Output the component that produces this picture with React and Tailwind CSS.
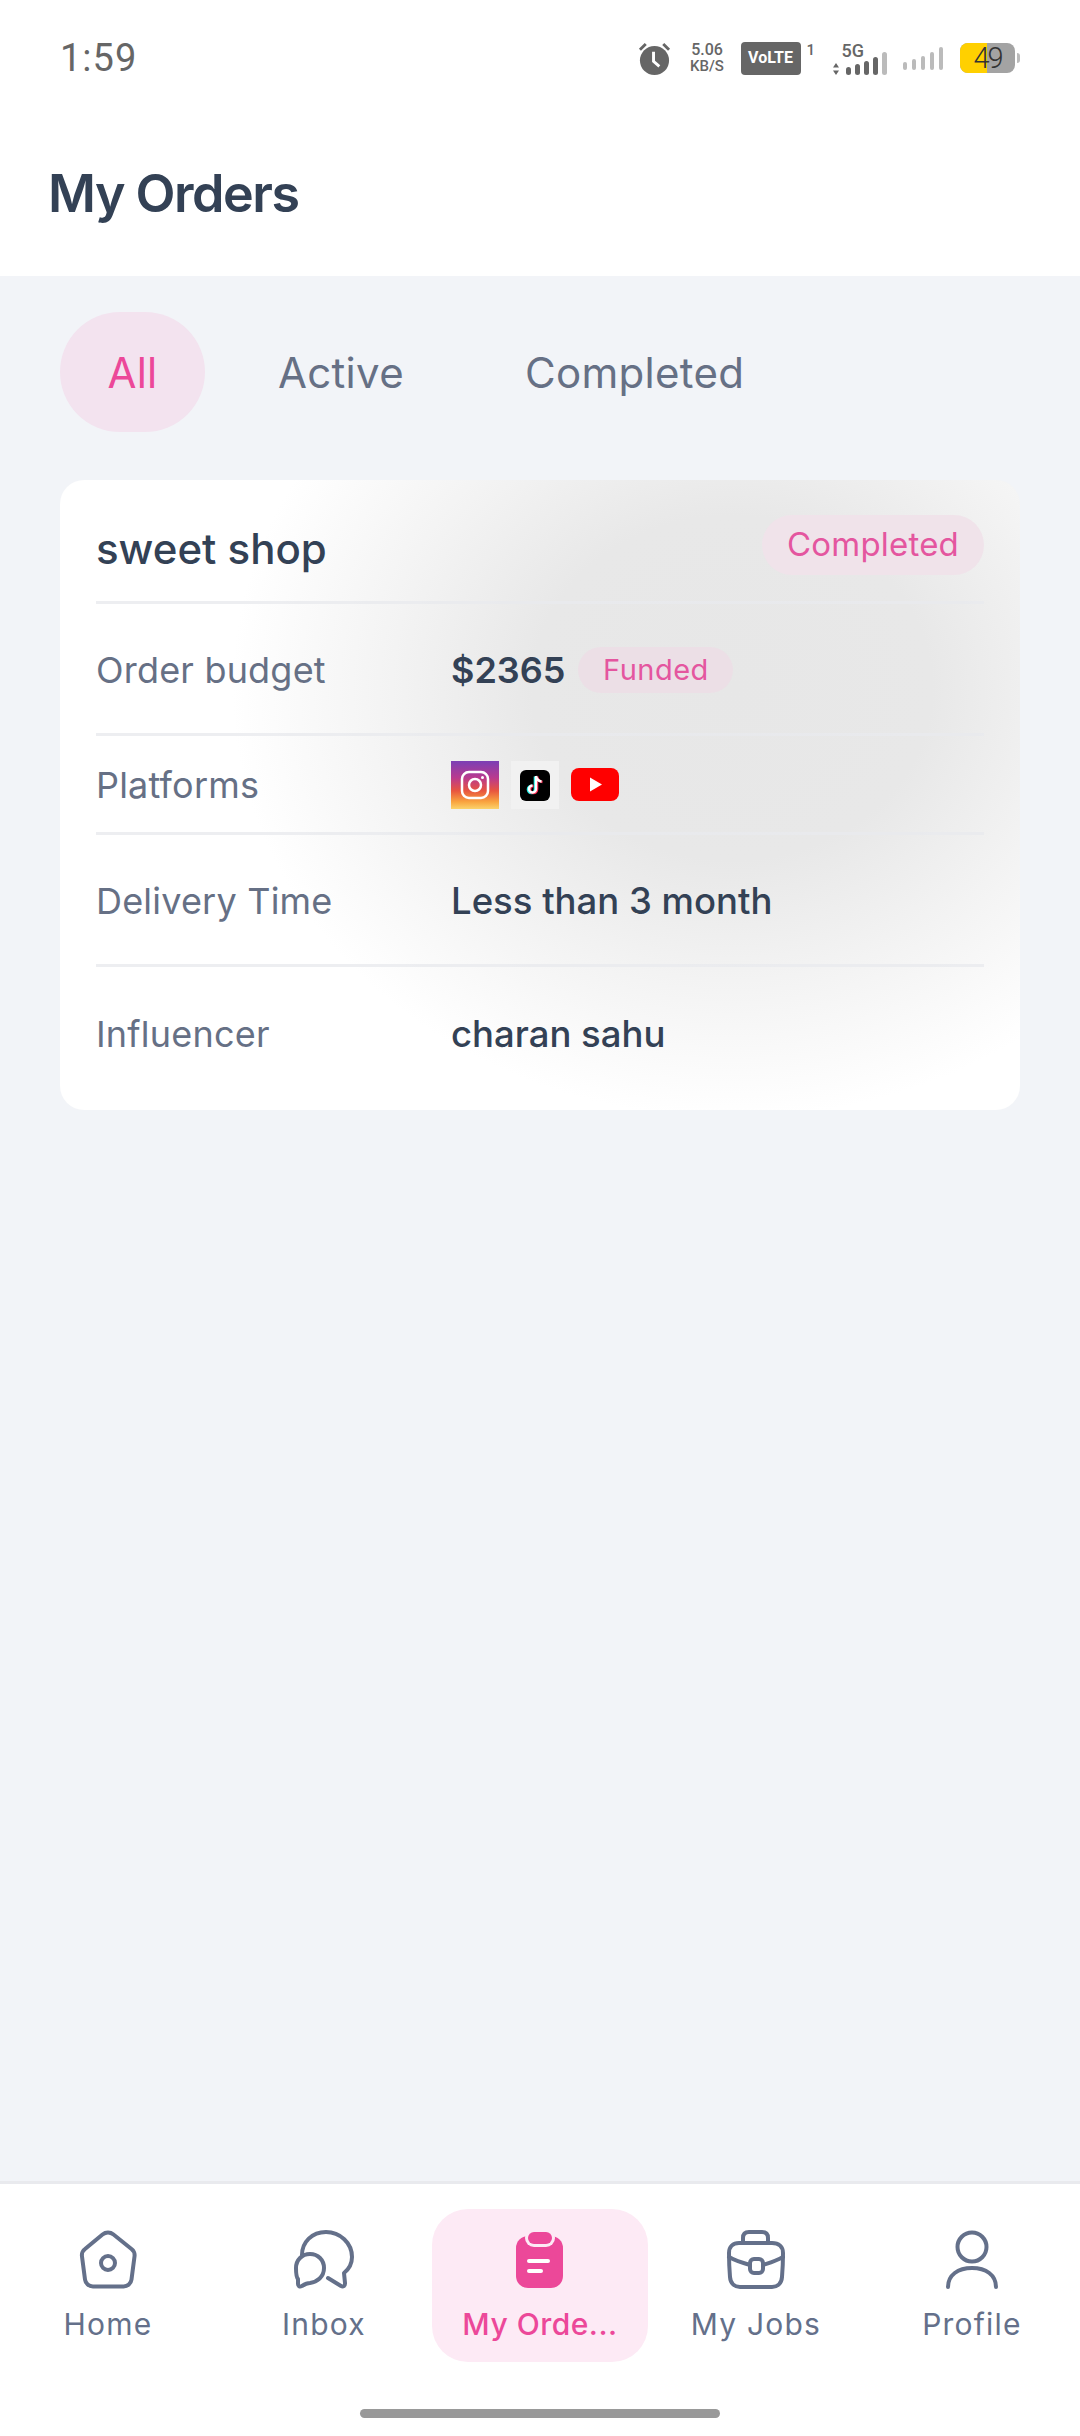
import React from 'react';

const navIconClass = 'w-[60px] h-[60px] text-[#64708a]';

const HomeIcon = () => (
  <svg viewBox="0 0 60 60" fill="none" stroke="currentColor" strokeWidth="4" strokeLinejoin="round" className={navIconClass}>
    <path d="M24.500 4.500a9 9 0 0 1 11 0l18 14.500a8 8 0 0 1 3 7.500l-3 23a8 8 0 0 1-8 7H15a8 8 0 0 1-8-7l-3-23a8 8 0 0 1 3-7.500z" />
    <circle cx="30" cy="33" r="7" />
  </svg>
);

const InboxIcon = () => (
  <svg viewBox="0 0 60 60" fill="none" stroke="currentColor" strokeWidth="4" strokeLinejoin="round" strokeLinecap="round" className={navIconClass}>
    <path d="M8 25C8 12 18 2 32 2c14 0 26 11 26 25 0 7-3 12-8 16l1 10c.3 3-2 4-4 3l-13-8" />
    <path d="M16 24c8 0 14 6 14 14 0 9-7 14-14 15-3 0-5 1-8 3-2.500 1-4 0-4-2v-5C2 47 2 43 2 38c0-8 6-14 14-14z" />
  </svg>
);

const OrdersIcon = () => (
  <svg viewBox="0 0 60 60" className="w-[60px] h-[60px]">
    <rect x="6" y="6" width="47" height="52" rx="12" fill="#ec4899" />
    <rect x="15" y="-1" width="30" height="18" rx="9" fill="#fdeaf5" />
    <rect x="18" y="2" width="24" height="12" rx="6" fill="#ec4899" />
    <rect x="17" y="29" width="23" height="4" rx="2" fill="#fff" />
    <rect x="17" y="39" width="16" height="4" rx="2" fill="#fff" />
  </svg>
);

const JobsIcon = () => (
  <svg viewBox="0 0 60 60" fill="none" stroke="currentColor" strokeWidth="4" strokeLinejoin="round" strokeLinecap="round" className={navIconClass}>
    <path d="M17 13V8c0-4 2-6 6-6h13c4 0 6 2 6 6v5" />
    <path d="M13 13h33c7 0 11 4 11 10 0 11-.5 18-1 24-.5 7-5 10-10 10H14c-5 0-9.500-3-10-10-.5-6-1-13-1-24 0-6 4-10 10-10z" />
    <path d="M3 27c7 4 14 6 21 8M57 27c-7 4-14 6-20 8" />
    <rect x="24" y="29" width="13" height="14" rx="4" />
  </svg>
);

const ProfileIcon = () => (
  <svg viewBox="0 0 60 60" fill="none" stroke="currentColor" strokeWidth="4" strokeLinecap="round" className={navIconClass}>
    <circle cx="30" cy="17" r="14.500" />
    <path d="M6 57c0-12 10-19 24-19s24 7 24 19" />
  </svg>
);

const InstagramIcon = () => (
  <div className="w-[48px] h-[48px] bg-[linear-gradient(180deg,#7b3fb5_0%,#b93a8e_35%,#e8553f_62%,#f9a43f_85%,#fbd36b_100%)]">
    <svg viewBox="0 0 48 48" fill="none" stroke="#fff" className="w-[48px] h-[48px]">
      <rect x="11" y="11" width="26" height="26" rx="7" strokeWidth="2.500" />
      <circle cx="24" cy="24" r="6" strokeWidth="2.500" />
      <circle cx="31.500" cy="16.500" r="1.500" fill="#fff" stroke="none" />
    </svg>
  </div>
);

const TiktokIcon = () => (
  <div className="w-[48px] h-[48px] flex items-center justify-center bg-[#f1f1f1]">
    <svg viewBox="0 0 32 32" className="w-[32px] h-[32px]">
      <rect x="1" y="1" width="30" height="31" rx="6" fill="#000" />
      <path d="M17 7v13a3.500 3.500 0 1 1-3.500-3.500" fill="none" stroke="#25f4ee" strokeWidth="2.600" transform="translate(-1 .5)" />
      <path d="M17 7v13a3.500 3.500 0 1 1-3.500-3.500M17 7c.5 3 2.500 5 5.500 5.500" fill="none" stroke="#fe2c55" strokeWidth="2.600" transform="translate(1 .5)" />
      <path d="M17 7v13a3.500 3.500 0 1 1-3.500-3.500M17 7c.5 3 2.500 5 5.500 5.500" fill="none" stroke="#fff" strokeWidth="2.400" />
    </svg>
  </div>
);

const YoutubeIcon = () => (
  <svg viewBox="0 0 48 34" className="w-[48px] h-[34px]">
    <rect x="0" y="0" width="48" height="33" rx="8" fill="#f00" />
    <path d="M19 9.500v14l12-7z" fill="#fff" />
  </svg>
);

const barHeights = [8, 11, 14, 18, 23];

const SignalBars = ({ on }) => (
  <div className="flex items-end gap-[4.500px]">
    {barHeights.map((h, i) => (
      <i
        key={i}
        className={`block w-[4.500px] rounded-full ${i < on ? 'bg-[#666]' : 'bg-[#bbb]'}`}
        style={{ height: h }}
      />
    ))}
  </div>
);

const StatusBar = () => (
  <div className="h-[116px] flex items-center justify-between pl-[60px] pr-[60px] font-['Roboto',sans-serif] text-[#666]">
    <span className="text-[38px] tracking-[1px] leading-none">1:59</span>
    <div className="flex items-center">
      <svg viewBox="0 0 34 34" className="w-[33px] h-[33px]">
        <circle cx="17" cy="19" r="15" fill="#666" />
        <path d="M16 10v10l6 5" stroke="#fff" strokeWidth="3" fill="none" />
        <path d="M2 8l6-6M32 8l-6-6" stroke="#666" strokeWidth="3" />
      </svg>
      <div className="ml-[17px] w-[39px] text-[16px] leading-[16px] font-medium text-center">
        <div>5.06</div>
        <div className="text-[15px]">KB/S</div>
      </div>
      <div className="ml-[14px] w-[60px] h-[33px] bg-[#666] rounded-[4px] text-white text-[16px] font-bold flex items-center justify-center leading-none">VoLTE</div>
      <span className="self-start mt-[1px] text-[15px] leading-none ml-[6px] w-[6px] font-medium">1</span>
      <div className="ml-[20px] relative w-[54px] h-[33px] flex items-end justify-end">
        <span className="absolute top-0 left-[9px] text-[18px] leading-none font-medium">5G</span>
        <svg viewBox="0 0 6 12" className="absolute left-0 bottom-0 w-[6px] h-[12px]">
          <path d="M3 0l3 4.500H0zM3 12L0 7.500h6z" fill="#666" />
        </svg>
        <SignalBars on={4} />
      </div>
      <div className="ml-[16px]">
        <SignalBars on={0} />
      </div>
      <div className="ml-[17px] relative w-[55px] h-[30px] rounded-[8px] bg-[#a3a3a3] flex items-center justify-center">
        <div className="absolute left-0 top-0 bottom-0 w-[27px] rounded-l-[8px] bg-[#ffd000]" />
        <span className="relative text-[29px] font-light tracking-[-2px] leading-none text-[#333]">49</span>
      </div>
      <div className="ml-[2px] w-[3px] h-[10px] bg-[#bbb] rounded-r-full" />
    </div>
  </div>
);

const Row = ({ label, className, children }) => (
  <div className={`flex items-center border-b-[3px] border-[#e9eaee]/80 last:border-b-0 ${className}`}>
    <span className="w-[355px] text-[#667085] text-[36px] tracking-[0.2px]">{label}</span>
    {children}
  </div>
);

const Value = ({ children }) => (
  <span className="text-[#334155] text-[36.500px] font-medium">{children}</span>
);

const navItems = [
  { label: 'Home', icon: HomeIcon },
  { label: 'Inbox', icon: InboxIcon },
  { label: 'My Orde...', icon: OrdersIcon, active: true },
  { label: 'My Jobs', icon: JobsIcon },
  { label: 'Profile', icon: ProfileIcon },
];

export default function App() {
  return (
    <div className="w-[1080px] h-[2436px] flex flex-col bg-[#f2f4f8] font-['Inter',sans-serif] overflow-hidden">
      <div className="bg-white h-[276px] shrink-0">
        <StatusBar />
        <h1 className="pl-[48px] mt-[48px] text-[#334155] text-[52px] leading-[60px] tracking-[-1.500px] font-semibold">My Orders</h1>
      </div>

      <div className="flex-1 px-[60px]">
        <div className="flex items-center mt-[36px] h-[120px] text-[42px] tracking-[0.3px]">
          <span className="w-[145px] h-[120px] rounded-[60px] bg-[#f3e3ef] text-[#ec4899] flex items-center justify-center">All</span>
          <span className="ml-[73px] text-[#667085]">Active</span>
          <span className="ml-[121px] text-[#667085]">Completed</span>
        </div>

        <div className="mt-[48px] h-[630px] rounded-[24px] pl-[36px] pr-[36px] bg-white bg-[radial-gradient(ellipse_500px_430px_at_70%_33%,#e7e7e7_0%,#e8e8e8_40%,#f3f3f3_68%,#ffffff_100%)] flex flex-col">
          <div className="h-[124px] pt-[16px] flex items-center justify-between border-b-[3px] border-[#e9eaee]/80">
            <span className="text-[#334155] text-[42px] font-medium">sweet shop</span>
            <span className="h-[60px] w-[222px] rounded-[30px] bg-[#f0e3ea] text-[#e4569f] text-[33px] tracking-[0.2px] flex items-center justify-center mb-[8px]">Completed</span>
          </div>
          <Row label="Order budget" className="h-[132px] pt-[2px]">
            <span className="text-[#334155] text-[36px] font-semibold">$2365</span>
            <span className="ml-[13px] h-[46px] w-[155px] rounded-[23px] bg-[#ecdfe6] text-[#e4569f] text-[29px] tracking-[0.5px] flex items-center justify-center">Funded</span>
          </Row>
          <Row label="Platforms" className="h-[99px] pt-[1px]">
            <div className="flex items-center gap-[12px]">
              <InstagramIcon />
              <TiktokIcon />
              <YoutubeIcon />
            </div>
          </Row>
          <Row label="Delivery Time" className="h-[132px] pt-[3px]">
            <Value>Less than 3 month</Value>
          </Row>
          <Row label="Influencer" className="flex-1 pb-[9px]">
            <Value>charan sahu</Value>
          </Row>
        </div>
      </div>

      <div className="shrink-0 h-[255px] bg-white border-t-[3px] border-[#e9eaee]">
        <div className="flex mt-[25px]">
          {navItems.map((item) => {
            const Icon = item.icon;
            return (
              <div
                key={item.label}
                className={`w-[216px] h-[153px] rounded-[36px] flex flex-col items-center pt-[21px] ${item.active ? 'bg-[#fdeaf5] text-[#ec4899]' : 'text-[#64708a]'}`}
              >
                <Icon />
                <span className={`mt-[16px] text-[30px] leading-[36px] ${item.active ? 'font-medium tracking-[0.5px]' : 'tracking-[1.2px]'}`}>{item.label}</span>
              </div>
            );
          })}
        </div>
        <div className="mt-[47px] mx-auto w-[360px] h-[9px] rounded-full bg-[#999]" />
      </div>
    </div>
  );
}
